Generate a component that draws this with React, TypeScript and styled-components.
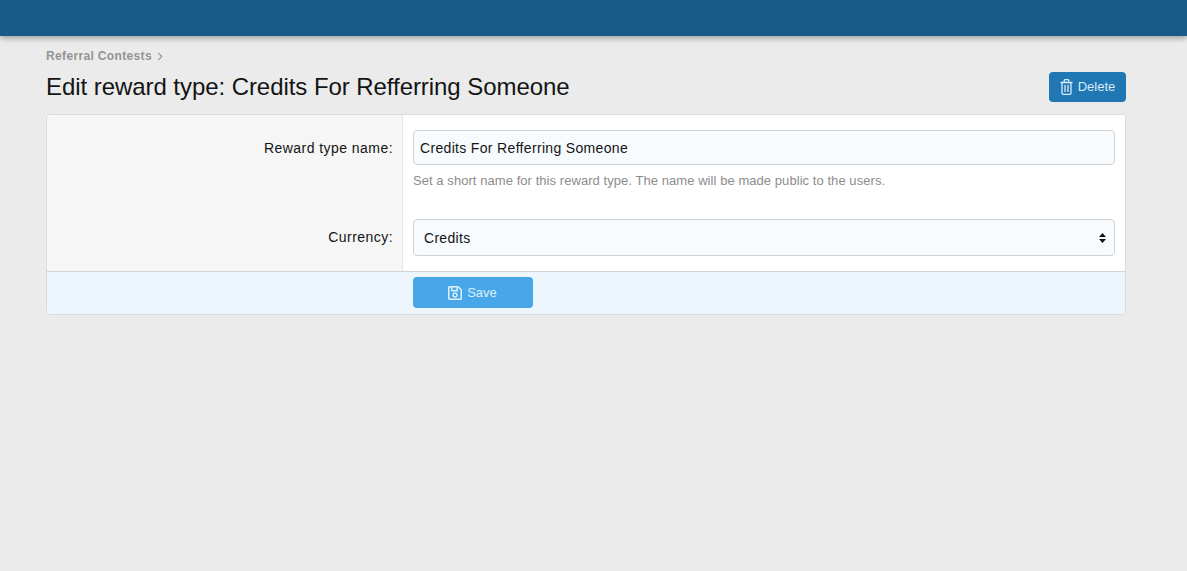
import styled, { createGlobalStyle } from "styled-components";
import { FaRegSave } from "react-icons/fa";

const GlobalStyle = createGlobalStyle`
    html, body {
        margin: 0;
        padding: 0;
        background: #ebebeb;
        font-family: "Liberation Sans", Arial, sans-serif;
        color: #141414;
    }
`;

const SELECT_ARROWS =
    "url(\"data:image/svg+xml,%3Csvg xmlns='http://www.w3.org/2000/svg' width='7' height='10'%3E%3Cpath fill='%23111' d='M3.5 0L7 4H0zM0 6h7l-3.5 4z'/%3E%3C/svg%3E\")";

const App = () => {
    return (
        <Page>
            <GlobalStyle />
            <TopBar />
            <Content>
                <Breadcrumb>
                    Referral Contests
                    <Chevron viewBox="0 0 6 10">
                        <path d="M1 1l4 4-4 4" />
                    </Chevron>
                </Breadcrumb>
                <TitleRow>
                    <Title>Edit reward type: Credits For Refferring Someone</Title>
                    <DeleteButton type="button">
                        <TrashIcon viewBox="0 0 13 16">
                            <path d="M.5 3.5h12M2 3.5v10.5a1.5 1.5 0 0 0 1.5 1.5h6a1.5 1.5 0 0 0 1.5-1.5V3.5" />
                            <path d="M4.2 3.5V1.6a1 1 0 0 1 1-1h2.6a1 1 0 0 1 1 1v1.9" />
                            <path d="M5 6v7M8 6v7" />
                        </TrashIcon>
                        Delete
                    </DeleteButton>
                </TitleRow>
                <Panel>
                    <Rows>
                        <Row>
                            <Label>Reward type name:</Label>
                            <Field>
                                <TextInput type="text" defaultValue="Credits For Refferring Someone" />
                                <Hint>Set a short name for this reward type. The name will be made public to the users.</Hint>
                            </Field>
                        </Row>
                        <Row $last>
                            <Label>Currency:</Label>
                            <Field>
                                <Select defaultValue="credits">
                                    <option value="credits">Credits</option>
                                </Select>
                            </Field>
                        </Row>
                    </Rows>
                    <Footer>
                        <SaveButton type="button">
                            <FaRegSave size={16} />
                            Save
                        </SaveButton>
                    </Footer>
                </Panel>
            </Content>
        </Page>
    );
};

const Page = styled.div`
    min-height: 571px;
`;

const TopBar = styled.div`
    height: 36px;
    background: #185b89;
    box-shadow: 0 2px 6px rgba(0, 0, 0, 0.35);
`;

const Content = styled.div`
    width: 1080px;
    margin-left: 46px;
    padding-top: 13px;
`;

const Breadcrumb = styled.div`
    display: flex;
    align-items: center;
    gap: 5px;
    height: 14px;
    font-size: 12px;
    font-weight: bold;
    letter-spacing: 0.35px;
    color: #949494;
`;

const Chevron = styled.svg`
    width: 6px;
    height: 9px;
    fill: none;
    stroke: #949494;
    stroke-width: 1.2;
`;

const TitleRow = styled.div`
    display: flex;
    justify-content: space-between;
    align-items: center;
    margin-top: 8px;
    margin-bottom: 12px;
    height: 31px;
`;

const Title = styled.h1`
    margin: 0;
    font-size: 24px;
    font-weight: normal;
    line-height: 30px;
    letter-spacing: -0.06px;
    color: #141414;
`;

const DeleteButton = styled.button`
    display: flex;
    align-items: center;
    justify-content: center;
    gap: 5px;
    width: 77px;
    height: 30px;
    padding: 0;
    border: 0;
    border-radius: 4px;
    background: #2077b3;
    color: #d7ecfa;
    font-family: inherit;
    font-size: 13px;
`;

const TrashIcon = styled.svg`
    width: 13px;
    height: 16px;
    fill: none;
    stroke: currentColor;
    stroke-width: 1.3;
`;

const Panel = styled.div`
    background: #fff;
    border: 1px solid #dcdcdc;
    border-radius: 4px;
    overflow: hidden;
`;

const Rows = styled.div`
    display: flex;
    flex-direction: column;
    background: linear-gradient(to right, #f6f6f6 0, #f6f6f6 355px, #e7e7e7 355px, #e7e7e7 356px, #fff 356px);
`;

const Row = styled.div<{ $last?: boolean }>`
    display: grid;
    grid-template-columns: 356px 1fr;
    padding-top: ${(p) => (p.$last ? "0" : "15px")};
    padding-bottom: ${(p) => (p.$last ? "15px" : "31px")};
`;

const Label = styled.div`
    padding: 9px 10px 0 0;
    text-align: right;
    font-size: 14px;
    line-height: 18px;
    letter-spacing: 0.45px;
    color: #141414;
`;

const Field = styled.div`
    padding: 0 10px;
    min-width: 0;
`;

const TextInput = styled.input`
    display: block;
    box-sizing: border-box;
    width: 100%;
    height: 35px;
    padding: 0 6px;
    border: 1px solid #d2d2d2;
    border-radius: 4px;
    background: #f8fbfe;
    color: #141414;
    font-family: inherit;
    font-size: 14px;
    letter-spacing: 0.33px;
`;

const Hint = styled.div`
    margin-top: 9px;
    font-size: 13px;
    line-height: 14px;
    letter-spacing: 0.06px;
    color: #8c8c8c;
`;

const Select = styled.select`
    display: block;
    box-sizing: border-box;
    width: 100%;
    height: 37px;
    padding: 0 10px;
    border: 1px solid #d2d2d2;
    border-radius: 4px;
    appearance: none;
    background-color: #f8fbfe;
    background-image: ${SELECT_ARROWS};
    background-repeat: no-repeat;
    background-position: right 8px center;
    color: #141414;
    font-family: inherit;
    font-size: 14px;
    letter-spacing: 0.3px;
`;

const Footer = styled.div`
    height: 43px;
    box-sizing: border-box;
    padding: 5px 0 0 366px;
    border-top: 1px solid #cfd4d9;
    background: #edf5fd;
`;

const SaveButton = styled.button`
    display: flex;
    align-items: center;
    justify-content: center;
    gap: 4px;
    width: 120px;
    height: 31px;
    padding: 0 2px 0 0;
    border: 0;
    border-radius: 4px;
    background: #47a7e8;
    color: #dcf0fc;
    font-family: inherit;
    font-size: 13px;
`;

export default App;
